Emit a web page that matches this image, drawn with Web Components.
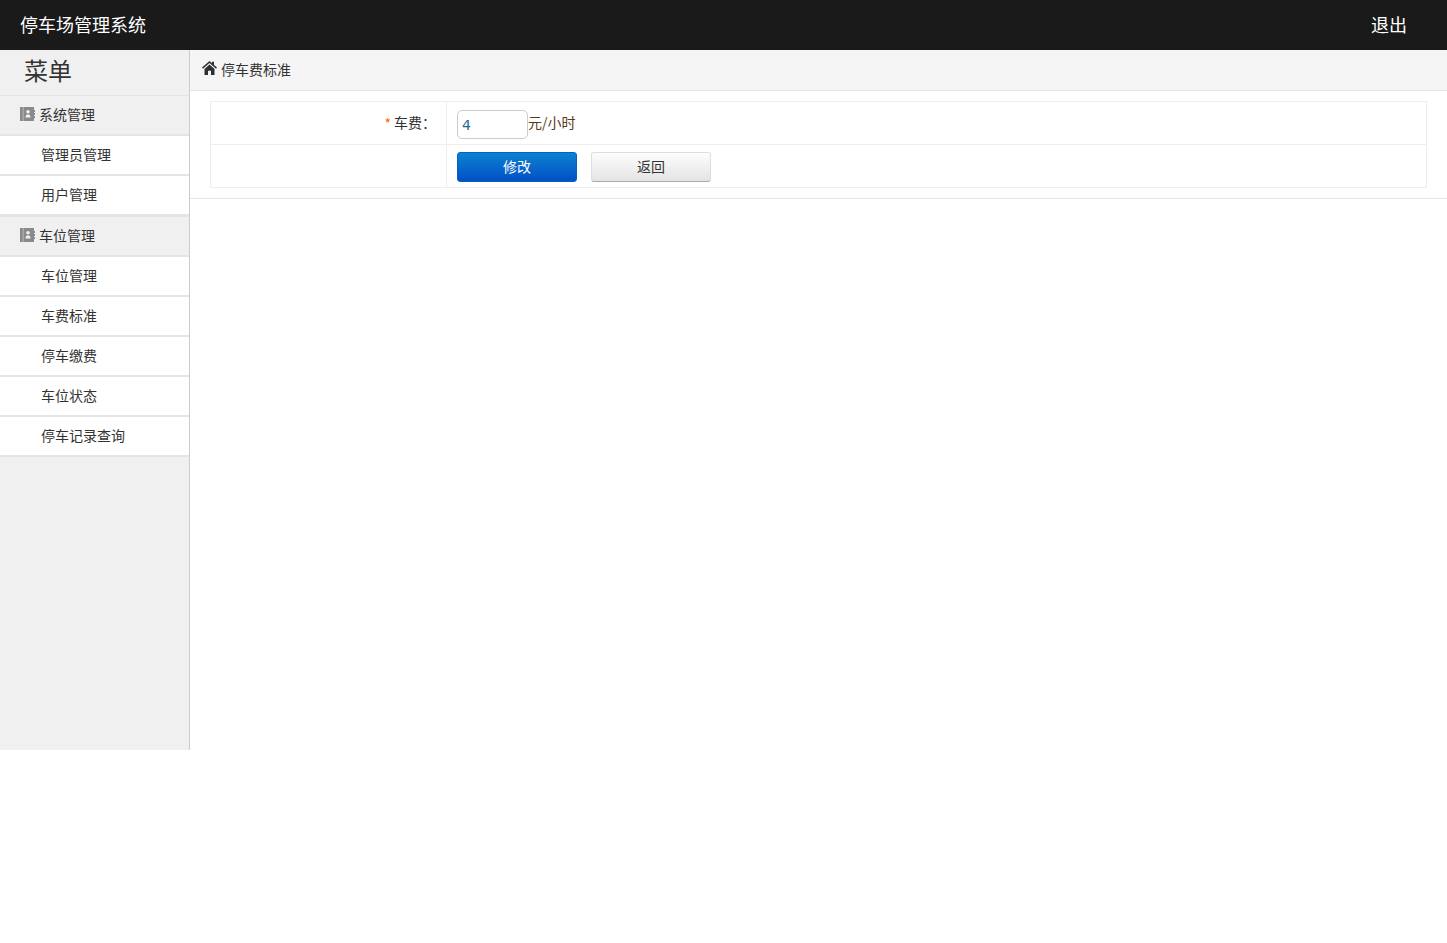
<!DOCTYPE html>
<html lang="zh">
<head>
<meta charset="utf-8">
<title>停车场管理系统</title>
<style>
html,body{margin:0;padding:0;background:#fff;}
body{font-family:"Noto Sans CJK SC","Liberation Sans",sans-serif;font-size:14px;color:#333;}
.layout{display:flex;height:700px;}
</style>
</head>
<body>
<app-header title-text="停车场管理系统" action="退出"></app-header>
<div class="layout">
	<side-menu heading="菜单">
		<menu-group label="系统管理">
			<menu-item>管理员管理</menu-item>
			<menu-item>用户管理</menu-item>
		</menu-group>
		<menu-group label="车位管理">
			<menu-item>车位管理</menu-item>
			<menu-item>车费标准</menu-item>
			<menu-item>停车缴费</menu-item>
			<menu-item>车位状态</menu-item>
			<menu-item>停车记录查询</menu-item>
		</menu-group>
	</side-menu>
	<main-panel crumb="停车费标准">
		<fee-form label="车费：" value="4" unit="元/小时"></fee-form>
	</main-panel>
</div>
<script>
(function() {
	const define = (name, html, attrs) => {
		const template = document.createElement('template');
		template.innerHTML = html;
		customElements.define(name, class extends HTMLElement {
			constructor() {
				super();
				this.attachShadow({mode: 'open'});
				this.shadowRoot.appendChild(template.content.cloneNode(true));
			}
			connectedCallback() {
				(attrs || []).forEach((attr) => {
					this.shadowRoot.querySelectorAll(`[data-text="${attr}"]`).forEach((node) => {
						node.textContent = this.getAttribute(attr);
					});
					this.shadowRoot.querySelectorAll(`[data-value="${attr}"]`).forEach((node) => {
						node.value = this.getAttribute(attr);
					});
				});
			}
		});
	};

	define('app-header', `
		<style>
		:host{display:flex;align-items:center;justify-content:space-between;height:50px;background:#1a1a1a;color:#fff;font-size:18px;padding:0 40px 2px 20px;box-sizing:border-box;}
		</style>
		<span data-text="title-text"></span>
		<span data-text="action"></span>
	`, ['title-text', 'action']);

	define('side-menu', `
		<style>
		:host{display:block;width:190px;flex:none;box-sizing:border-box;background:#f0f0f0;border-right:1px solid #ccc;}
		h2{margin:0;height:45px;line-height:39px;padding-left:24px;font-size:24px;font-weight:400;color:#333;box-sizing:border-box;}
		</style>
		<h2 data-text="heading"></h2>
		<slot></slot>
	`, ['heading']);

	define('menu-group', `
		<style>
		:host{display:block;border-top:1px solid #e5e5e5;}
		.head{display:flex;align-items:center;gap:4px;padding:0 0 2px 20px;height:36px;color:#333;border-bottom:2px solid #e5e5e5;}
		svg{display:block;flex:none;}
		</style>
		<div class="head">
			<svg width="15" height="14" viewBox="0 0 15 14">
				<path fill="#a8a8a8" d="M0 0h14v14H0z"/>
				<path fill="#8a8a8a" d="M0 0h2.500v14H0zM4 0h10v3h1v2h-1v1h1v2h-1v1h1v2h-1v3H4z"/>
				<path fill="#f0f0f0" d="M8 3a1.800 1.800 0 1 1 0 3.600A1.800 1.800 0 0 1 8 3zM5.500 10.500c0-2.500 1-3 2.500-3s2.500.5 2.500 3z"/>
			</svg>
			<span data-text="label"></span>
		</div>
		<slot></slot>
	`, ['label']);

	define('menu-item', `
		<style>
		:host{display:block;}
		a{display:block;height:38px;line-height:36px;padding-left:41px;background:#fff;color:#333;border-bottom:2px solid #e5e5e5;}
		</style>
		<a><slot></slot></a>
	`);

	define('main-panel', `
		<style>
		:host{display:block;flex:1;min-width:0;}
		.crumb{display:flex;align-items:center;gap:4px;height:41px;box-sizing:border-box;padding:0 0 2px 12px;background:#f5f5f5;border-bottom:1px solid #e5e5e5;color:#333;}
		svg{display:block;flex:none;margin-bottom:2px;}
		.body{padding:10px 20px;border-bottom:1px solid #e5e5e5;}
		</style>
		<div class="crumb">
			<svg width="15" height="14" viewBox="0 0 15 14">
				<path fill="#2f2f2f" d="M7.500 0 0 6.600l1 1.200L7.500 2l6.500 5.800 1-1.200-3-2.600V.800h-2v1.400z"/>
				<path fill="#2f2f2f" d="M7.500 3.500 2.500 8v6H6V9.800h3V14h3.500V8z"/>
			</svg>
			<span data-text="crumb"></span>
		</div>
		<div class="body"><slot></slot></div>
	`, ['crumb']);

	define('fee-form', `
		<style>
		:host{display:grid;grid-template-columns:235px 1fr;grid-auto-rows:42px;gap:1px;background:#eee;border:1px solid #eee;color:#333;}
		.label,.field{background:#fff;display:flex;align-items:center;}
		.label{justify-content:flex-end;padding:0 10px 2px 0;}
		.req{color:#f60;margin-right:3px;padding-top:1px;}
		.field{padding:2px 0 0 10px;}
		input{width:71px;height:29px;box-sizing:border-box;border:1px solid #ccc;border-radius:5px;padding:1px 4px 0;margin:0;font:14px "DejaVu Sans",sans-serif;color:#2a6a90;background:#fff;outline:none;}
		.unit{color:#5a3a1a;margin-bottom:4px;}
		.btn{width:120px;height:30px;box-sizing:border-box;border-radius:3px;font:14px "Noto Sans CJK SC",sans-serif;padding:0 0 2px;margin:0;}
		.save{background:linear-gradient(#0b82d2,#0250c5);color:#fff;border:1px solid #0560c4;}
		.back{background:linear-gradient(#fdfdfd,#e4e4e4);color:#333;border:1px solid #ddd;border-bottom-color:#aaa;margin-left:14px;}
		</style>
		<div class="label"><span class="req">*</span><span data-text="label"></span></div>
		<div class="field"><input data-value="value"><span class="unit" data-text="unit"></span></div>
		<div class="label"></div>
		<div class="field"><button class="btn save">修改</button><button class="btn back">返回</button></div>
	`, ['label', 'value', 'unit']);
})();
</script>
</body>
</html>
